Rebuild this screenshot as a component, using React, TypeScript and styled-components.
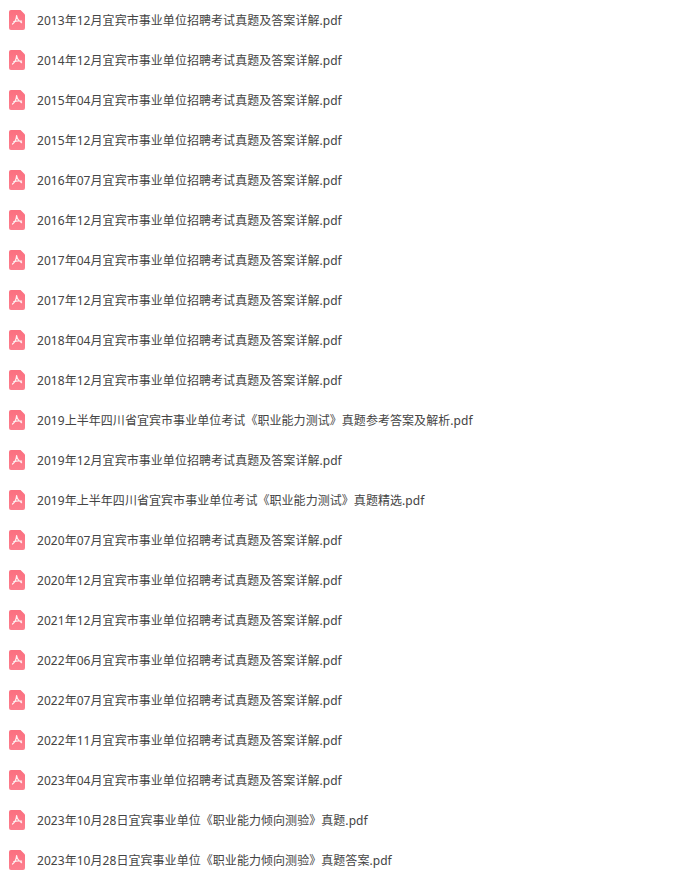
import React from 'react'
import styled, { createGlobalStyle } from 'styled-components'

const files = [
  '2013年12月宜宾市事业单位招聘考试真题及答案详解.pdf',
  '2014年12月宜宾市事业单位招聘考试真题及答案详解.pdf',
  '2015年04月宜宾市事业单位招聘考试真题及答案详解.pdf',
  '2015年12月宜宾市事业单位招聘考试真题及答案详解.pdf',
  '2016年07月宜宾市事业单位招聘考试真题及答案详解.pdf',
  '2016年12月宜宾市事业单位招聘考试真题及答案详解.pdf',
  '2017年04月宜宾市事业单位招聘考试真题及答案详解.pdf',
  '2017年12月宜宾市事业单位招聘考试真题及答案详解.pdf',
  '2018年04月宜宾市事业单位招聘考试真题及答案详解.pdf',
  '2018年12月宜宾市事业单位招聘考试真题及答案详解.pdf',
  '2019上半年四川省宜宾市事业单位考试《职业能力测试》真题参考答案及解析.pdf',
  '2019年12月宜宾市事业单位招聘考试真题及答案详解.pdf',
  '2019年上半年四川省宜宾市事业单位考试《职业能力测试》真题精选.pdf',
  '2020年07月宜宾市事业单位招聘考试真题及答案详解.pdf',
  '2020年12月宜宾市事业单位招聘考试真题及答案详解.pdf',
  '2021年12月宜宾市事业单位招聘考试真题及答案详解.pdf',
  '2022年06月宜宾市事业单位招聘考试真题及答案详解.pdf',
  '2022年07月宜宾市事业单位招聘考试真题及答案详解.pdf',
  '2022年11月宜宾市事业单位招聘考试真题及答案详解.pdf',
  '2023年04月宜宾市事业单位招聘考试真题及答案详解.pdf',
  '2023年10月28日宜宾事业单位《职业能力倾向测验》真题.pdf',
  '2023年10月28日宜宾事业单位《职业能力倾向测验》真题答案.pdf',
]

const PdfIcon = () => (
  <IconSvg viewBox="0 0 16 20" aria-hidden="true">
    <defs>
      <linearGradient id="pdf-fill" x1="0" y1="0" x2="0" y2="1">
        <stop offset="0" stopColor="#fb6f7f" />
        <stop offset="1" stopColor="#fd7f8f" />
      </linearGradient>
    </defs>
    <path
      d="M2 0h9.500L16 4.500V18a2 2 0 0 1-2 2H2a2 2 0 0 1-2-2V2a2 2 0 0 1 2-2z"
      fill="url(#pdf-fill)"
    />
    <path
      d="M7.600 5.500c-.2 3.200-1.500 6.600-4.100 8.600M7.600 5.500c.4 2.700 2 5.400 5 7.200M4.800 11.600c2.400-.9 5.200-1 7.800-.5"
      fill="none"
      stroke="#fff"
      strokeOpacity="0.9"
      strokeWidth="1.200"
      strokeLinecap="round"
    />
  </IconSvg>
)

export default function App() {
  return (
    <>
      <GlobalStyle />
      <FileList>
        {files.map((name) => (
          <FileRow key={name}>
            <PdfIcon />
            <FileName>{name}</FileName>
          </FileRow>
        ))}
      </FileList>
    </>
  )
}

const GlobalStyle = createGlobalStyle`
  html, body {
    margin: 0;
    background: #fff;
  }
`

const FileList = styled.ul`
  list-style: none;
  margin: 0;
  padding: 0 0 9px;
  font-family: 'Noto Sans', 'Noto Sans CJK SC', sans-serif;
`

const FileRow = styled.li`
  display: flex;
  align-items: center;
  height: 40px;
  padding-left: 9px;
`

const IconSvg = styled.svg`
  flex: none;
  width: 16px;
  height: 20px;
  margin-right: 12px;
`

const FileName = styled.span`
  padding-top: 2px;
  font-size: 12px;
  line-height: 20px;
  letter-spacing: 0.05px;
  color: #444;
  white-space: nowrap;
`
